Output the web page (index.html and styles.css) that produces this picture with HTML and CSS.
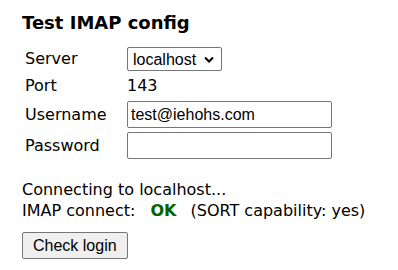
FILE: index.html
```html
<!DOCTYPE html>
<html>
  <head>
    <meta charset="utf-8">
    <title>Test IMAP config</title>
    <link rel="stylesheet" href="styles.css">
  </head>
  <body>
    <h3 class="title">Test IMAP config</h3>
    <table class="config">
      <tr>
        <td class="label">Server</td>
        <td>
          <span class="select-wrap">
            <select class="field-select">
              <option>localhost</option>
            </select>
            <svg class="select-arrow" width="10" height="7" viewBox="0 0 10 7">
              <path d="M1 1.5 L5 5.5 L9 1.5" fill="none" stroke="#000" stroke-width="2"/>
            </svg>
          </span>
        </td>
      </tr>
      <tr>
        <td class="label">Port</td>
        <td>143</td>
      </tr>
      <tr>
        <td class="label">Username</td>
        <td><input type="text" class="field-input" value="test@iehohs.com"></td>
      </tr>
      <tr>
        <td class="label">Password</td>
        <td><input type="password" class="field-input" value=""></td>
      </tr>
    </table>
    <p class="result">
      Connecting to localhost...<br>
      IMAP connect: <span class="ok">OK</span> (SORT capability: yes)
    </p>
    <button class="button">Check login</button>
  </body>
</html>
```

FILE: styles.css
```css
body {
  margin: 0;
  padding: 0 22px;
  font-family: "DejaVu Sans", Verdana, sans-serif;
  font-size: 16px;
  color: #000;
  background-color: #fff;
}

.title {
  font-size: 18px;
  font-weight: bold;
  margin: 12px 0 10px 0;
  line-height: 22px;
}

.config {
  border-spacing: 2px;
  margin-left: -2px;
}

.config td {
  padding: 1px;
  line-height: 22px;
}

.config .label {
  width: 98px;
  padding-left: 3px;
}

.select-wrap {
  position: relative;
  display: inline-block;
  vertical-align: middle;
}

.field-select {
  -webkit-appearance: none;
  appearance: none;
  display: block;
  font-family: "Liberation Sans", Arial, sans-serif;
  font-size: 16px;
  width: 95px;
  height: 24px;
  box-sizing: border-box;
  padding: 0 0 0 5px;
  border: 1px solid #767676;
  border-radius: 2px;
  background-color: #fff;
  color: #000;
}

.select-arrow {
  position: absolute;
  right: 8px;
  top: 9px;
  pointer-events: none;
}

.field-input {
  font-family: "Liberation Sans", Arial, sans-serif;
  font-size: 16px;
  width: 205px;
  height: 27px;
  box-sizing: border-box;
  padding: 1px 3px;
  border: 1px solid #767676;
  border-radius: 2px;
  margin: 0;
}

.result {
  margin: 17px 0 11px 0;
  line-height: 21px;
}

.result .ok {
  font-weight: bold;
  color: #006400;
  margin: 0 9px 0 10px;
}

.button {
  font-family: "Liberation Sans", Arial, sans-serif;
  font-size: 16px;
  padding: 2px 10px;
  height: 27px;
  background-color: #efefef;
  border: 1px solid #767676;
  border-radius: 2px;
  color: #000;
}
```
